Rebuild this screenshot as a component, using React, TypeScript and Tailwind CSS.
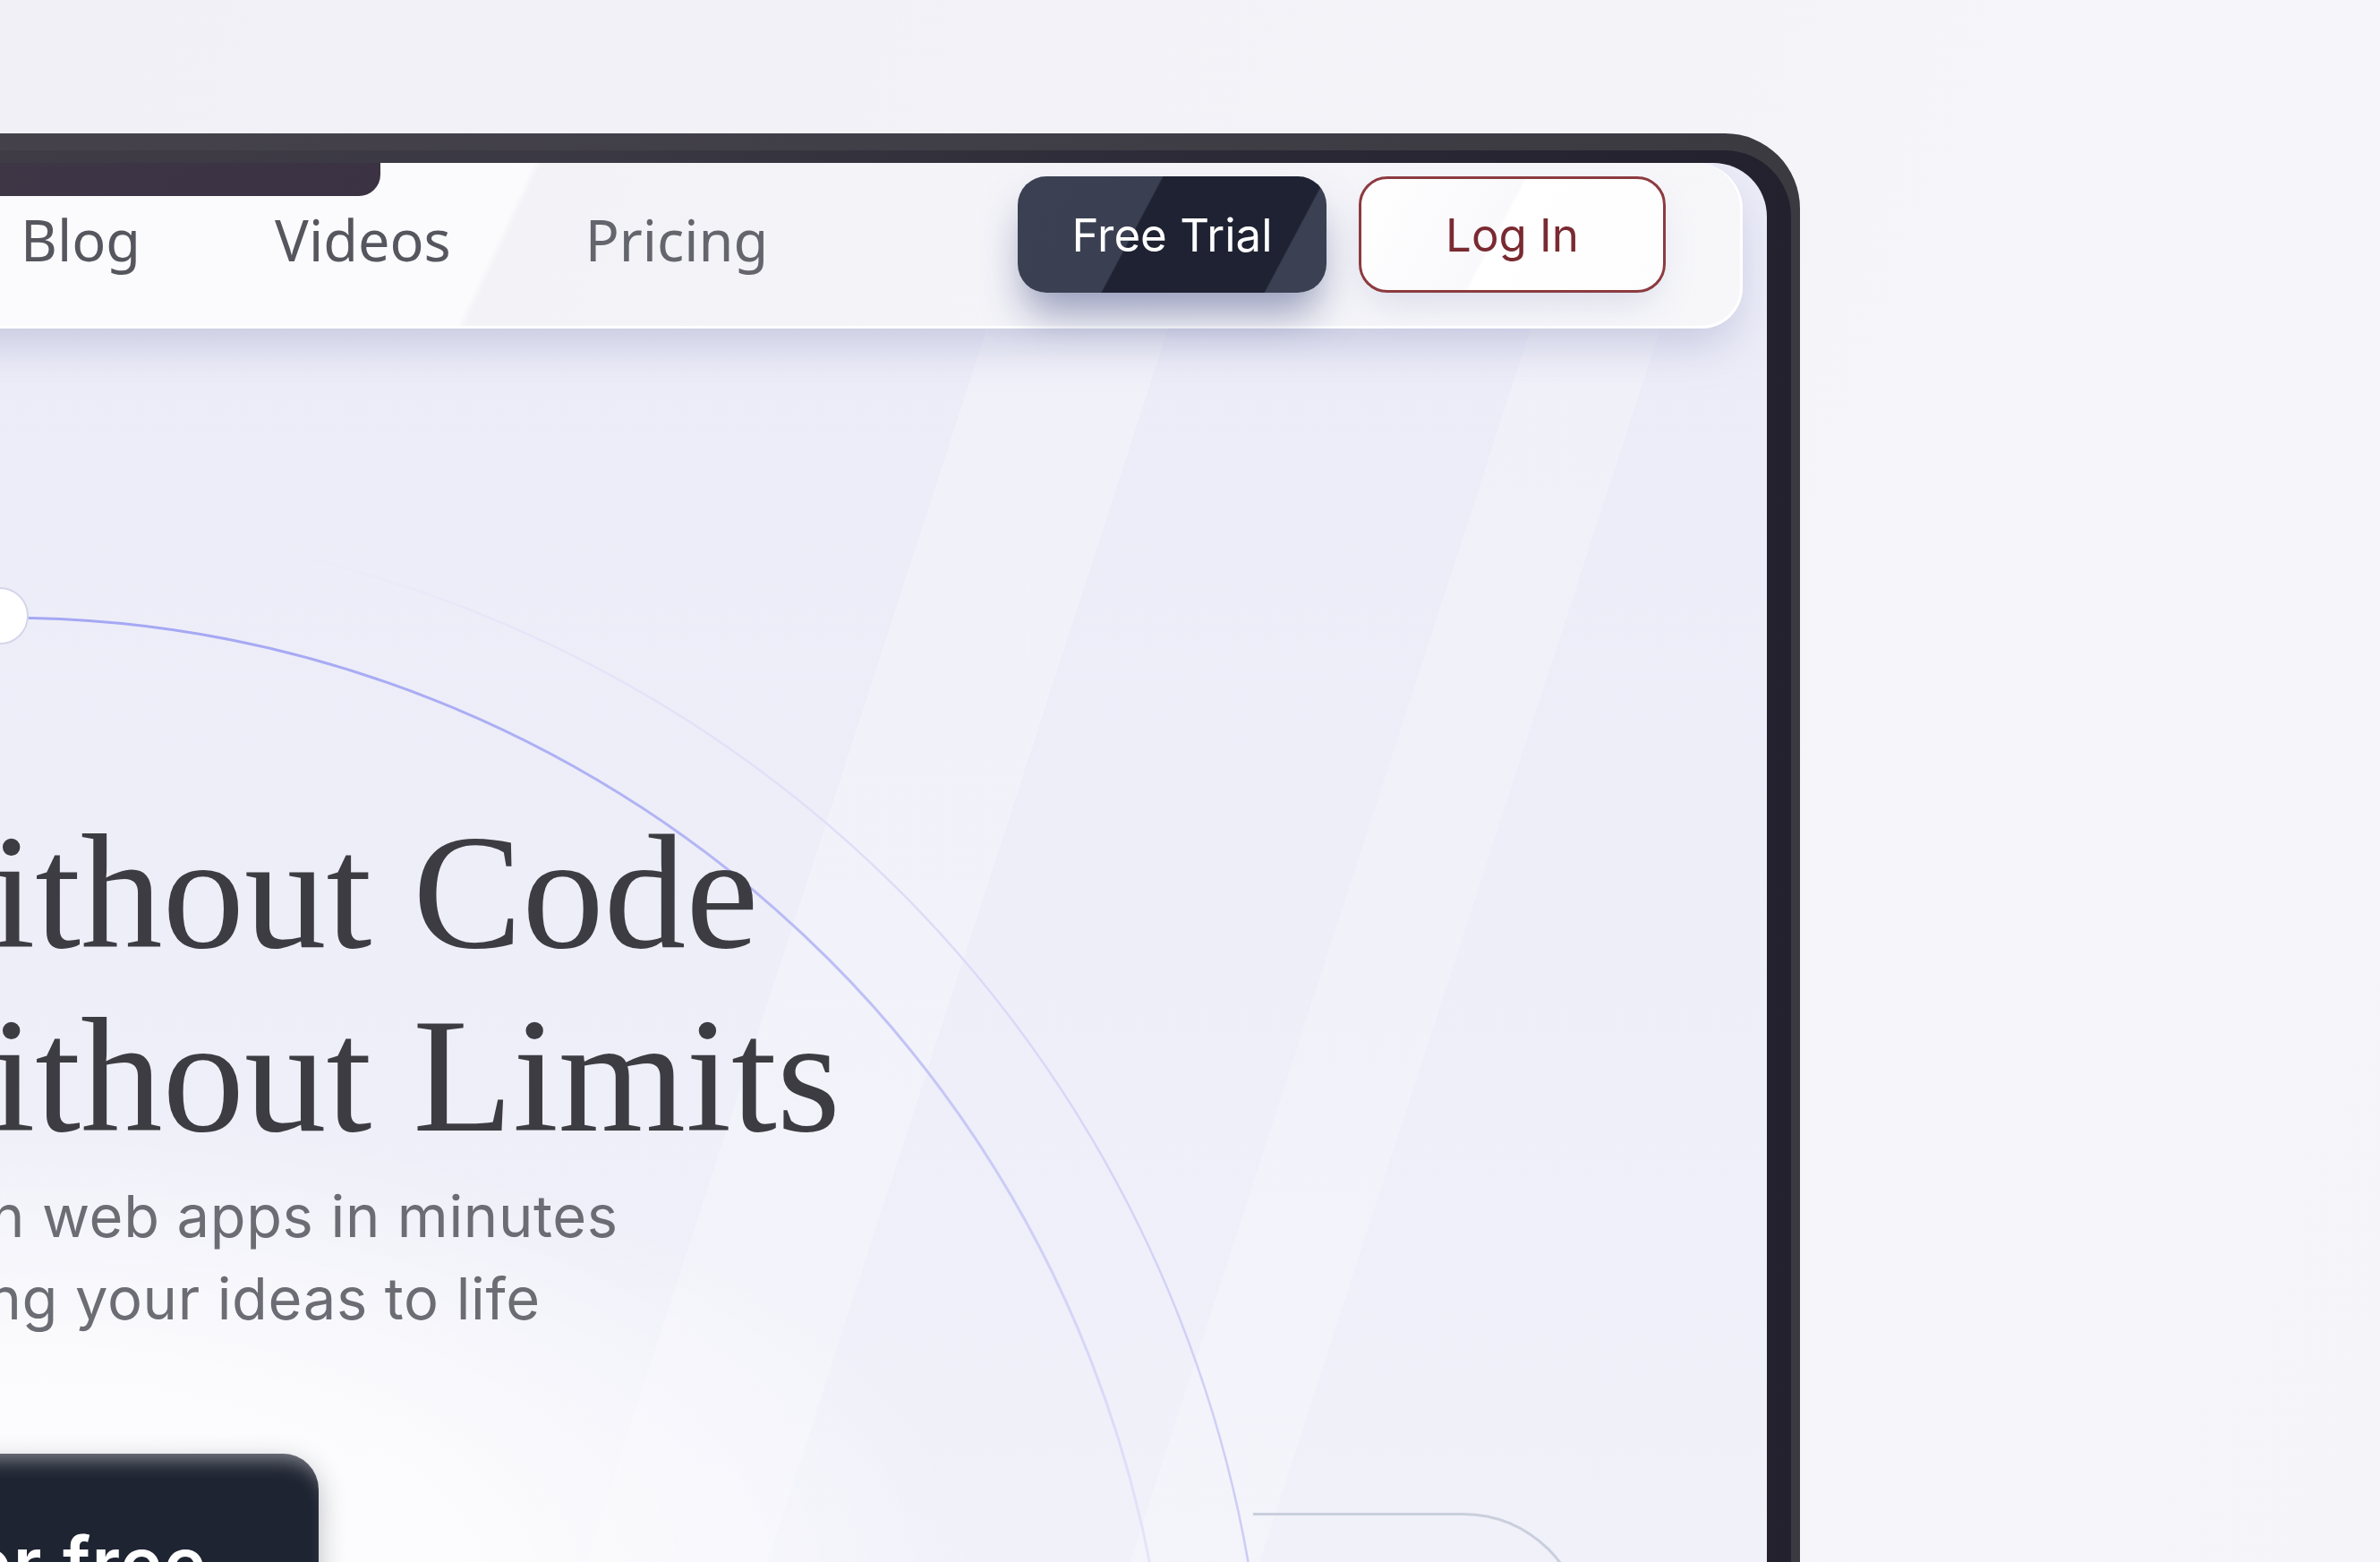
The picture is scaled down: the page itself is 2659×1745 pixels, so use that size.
import React from "react";

const navLinks = ["Blog", "Videos", "Pricing"];

function HeroArcs() {
  // drawn in page coordinates, the screen starts at (-400, 182)
  return (
    <svg
      className="pointer-events-none absolute left-0 top-0"
      width={2374}
      height={1600}
      viewBox="-400 182 2374 1600"
      fill="none"
    >
      <defs>
        <linearGradient id="arcInner" gradientUnits="userSpaceOnUse" x1="0" y1="680" x2="0" y2="1760">
          <stop offset="0" stopColor="#a4a7f3" />
          <stop offset="0.35" stopColor="#bbbdf5" />
          <stop offset="1" stopColor="#e6e6f9" />
        </linearGradient>
        <linearGradient id="arcOuter" gradientUnits="userSpaceOnUse" x1="250" y1="560" x2="1400" y2="1745">
          <stop offset="0" stopColor="#eeeef9" stopOpacity="0" />
          <stop offset="0.18" stopColor="#e6e6f8" />
          <stop offset="0.6" stopColor="#dadaf7" />
          <stop offset="1" stopColor="#cbccf5" />
        </linearGradient>
      </defs>
      <circle cx={15} cy={1985} r={1400} stroke="url(#arcOuter)" strokeWidth={2.5} />
      <circle cx={4} cy={1994} r={1304} stroke="url(#arcInner)" strokeWidth={3} />
      <circle cx={0} cy={688} r={31} fill="#ffffff" stroke="#d3d6ea" strokeWidth={2} />
    </svg>
  );
}

export default function App() {
  return (
    <div className="h-[1745px] w-[2659px] overflow-hidden bg-[linear-gradient(110deg,#f0f0f6_0%,#f3f3f8_55%,#f6f6fa_75%,#f4f4f9_100%)] pt-[149px]">
      {/* device bezel, cut off on the left and bottom */}
      <div className="ml-[-400px] w-[2411px] rounded-tr-[84px] bg-[linear-gradient(90deg,#46434c_0%,#403e46_60%,#3b3a41_100%)] pr-[10px] pt-[19px]">
        <div className="rounded-tr-[74px] bg-[linear-gradient(90deg,#413e48_0%,#3a3842_45%,#2a2935_75%,#22212d_100%)] pr-[27px] pt-[14px]">
          <div className="relative h-[1600px] overflow-hidden rounded-tr-[60px] bg-[linear-gradient(108deg,transparent_0%,transparent_54%,rgba(255,255,255,0.22)_54%,rgba(255,255,255,0.22)_61%,transparent_61%,transparent_75%,rgba(255,255,255,0.2)_75%,rgba(255,255,255,0.2)_80%,transparent_80%),radial-gradient(ellipse_1500px_750px_at_18%_100%,#ffffff_0%,rgba(255,255,255,0.75)_35%,rgba(255,255,255,0)_72%),linear-gradient(180deg,#ececf8_0%,#eeeef9_50%,#f1f1fa_100%)]">
            <HeroArcs />

            {/* camera tab */}
            <div className="absolute left-0 top-0 z-20 h-[37px] w-[825px] rounded-br-[24px] bg-[linear-gradient(90deg,#403a48,#3b3243)]" />

            <nav className="relative z-10 mr-[27px] flex h-[185px] items-start rounded-br-[46px] rounded-tr-[52px] border-b-[3px] border-r-[3px] border-white bg-[linear-gradient(115deg,#fbfbfd_0%,#fbfbfd_41%,#f2f2f7_41.4%,#f4f4f9_70%,#f7f7fa_100%)] pl-[423px] pr-[83px] shadow-[0_24px_50px_-8px_rgba(120,130,175,0.35)]">
              <ul className="mt-[54px] flex gap-[150px] font-['Noto_Sans',sans-serif] text-[63px] leading-none text-[#56565f]">
                {navLinks.map((l) => (
                  <li key={l} className={l === "Pricing" ? "text-[#65656d]" : ""}>
                    {l}
                  </li>
                ))}
              </ul>
              <div className="ml-auto mt-[15px] flex gap-[36px] font-['Inter',sans-serif] text-[51px] leading-none">
                <button className="flex h-[130px] w-[345px] items-center justify-center rounded-[32px] bg-[linear-gradient(118deg,#3b4052_0%,#3a3f51_39%,#1e2232_39.5%,#1e2232_83%,#3b4053_83.5%)] text-white shadow-[0_30px_45px_-8px_rgba(60,70,125,0.5)]">
                  Free Trial
                </button>
                <button className="flex h-[130px] w-[343px] items-center justify-center rounded-[32px] border-[3px] border-[#8c3b40] bg-[linear-gradient(118deg,#ffffff_0%,#f9f9fc_45%,#ffffff_46%,#fdfdfe_100%)] text-[#7a2a31] shadow-[0_20px_40px_-12px_rgba(140,150,190,0.3)]">
                  Log In
                </button>
              </div>
            </nav>

            <div className="relative z-10 flex">
              <div className="w-[1800px] shrink-0 pl-[211px]">
                <h1 className="ml-[12px] mt-[527px] whitespace-nowrap font-['Liberation_Serif',serif] text-[183px] font-normal leading-[205px] text-[#3c3c42]">
                  Without Code
                  <br />
                  Without Limits
                </h1>
                <p className="mt-[9px] whitespace-nowrap font-['Inter',sans-serif] text-[65px] leading-[92px] tracking-[0.01em] text-[#6c6c74]">
                  <span className="block">Design web apps in minutes</span>
                  <span className="-ml-[44px] block">and bring your ideas to life</span>
                </p>
                <button className="mt-[127px] flex h-[260px] w-[545px] items-start justify-end whitespace-nowrap rounded-[40px] bg-[#1f2432] pr-[124px] pt-[82px] font-['Inter',sans-serif] text-[80px] font-semibold leading-none tracking-[0.02em] text-white shadow-[inset_0_20px_22px_-14px_rgba(255,255,255,0.45),0_10px_30px_rgba(30,35,50,0.3)]">
                  Try it for free
                </button>
              </div>
              <div className="flex-1 pt-[1323px]">
                <div className="h-[300px] w-[371px] rounded-tr-[136px] border-r-[3px] border-t-[3px] border-[#c9cfdc]" />
              </div>
            </div>
          </div>
        </div>
      </div>
    </div>
  );
}
